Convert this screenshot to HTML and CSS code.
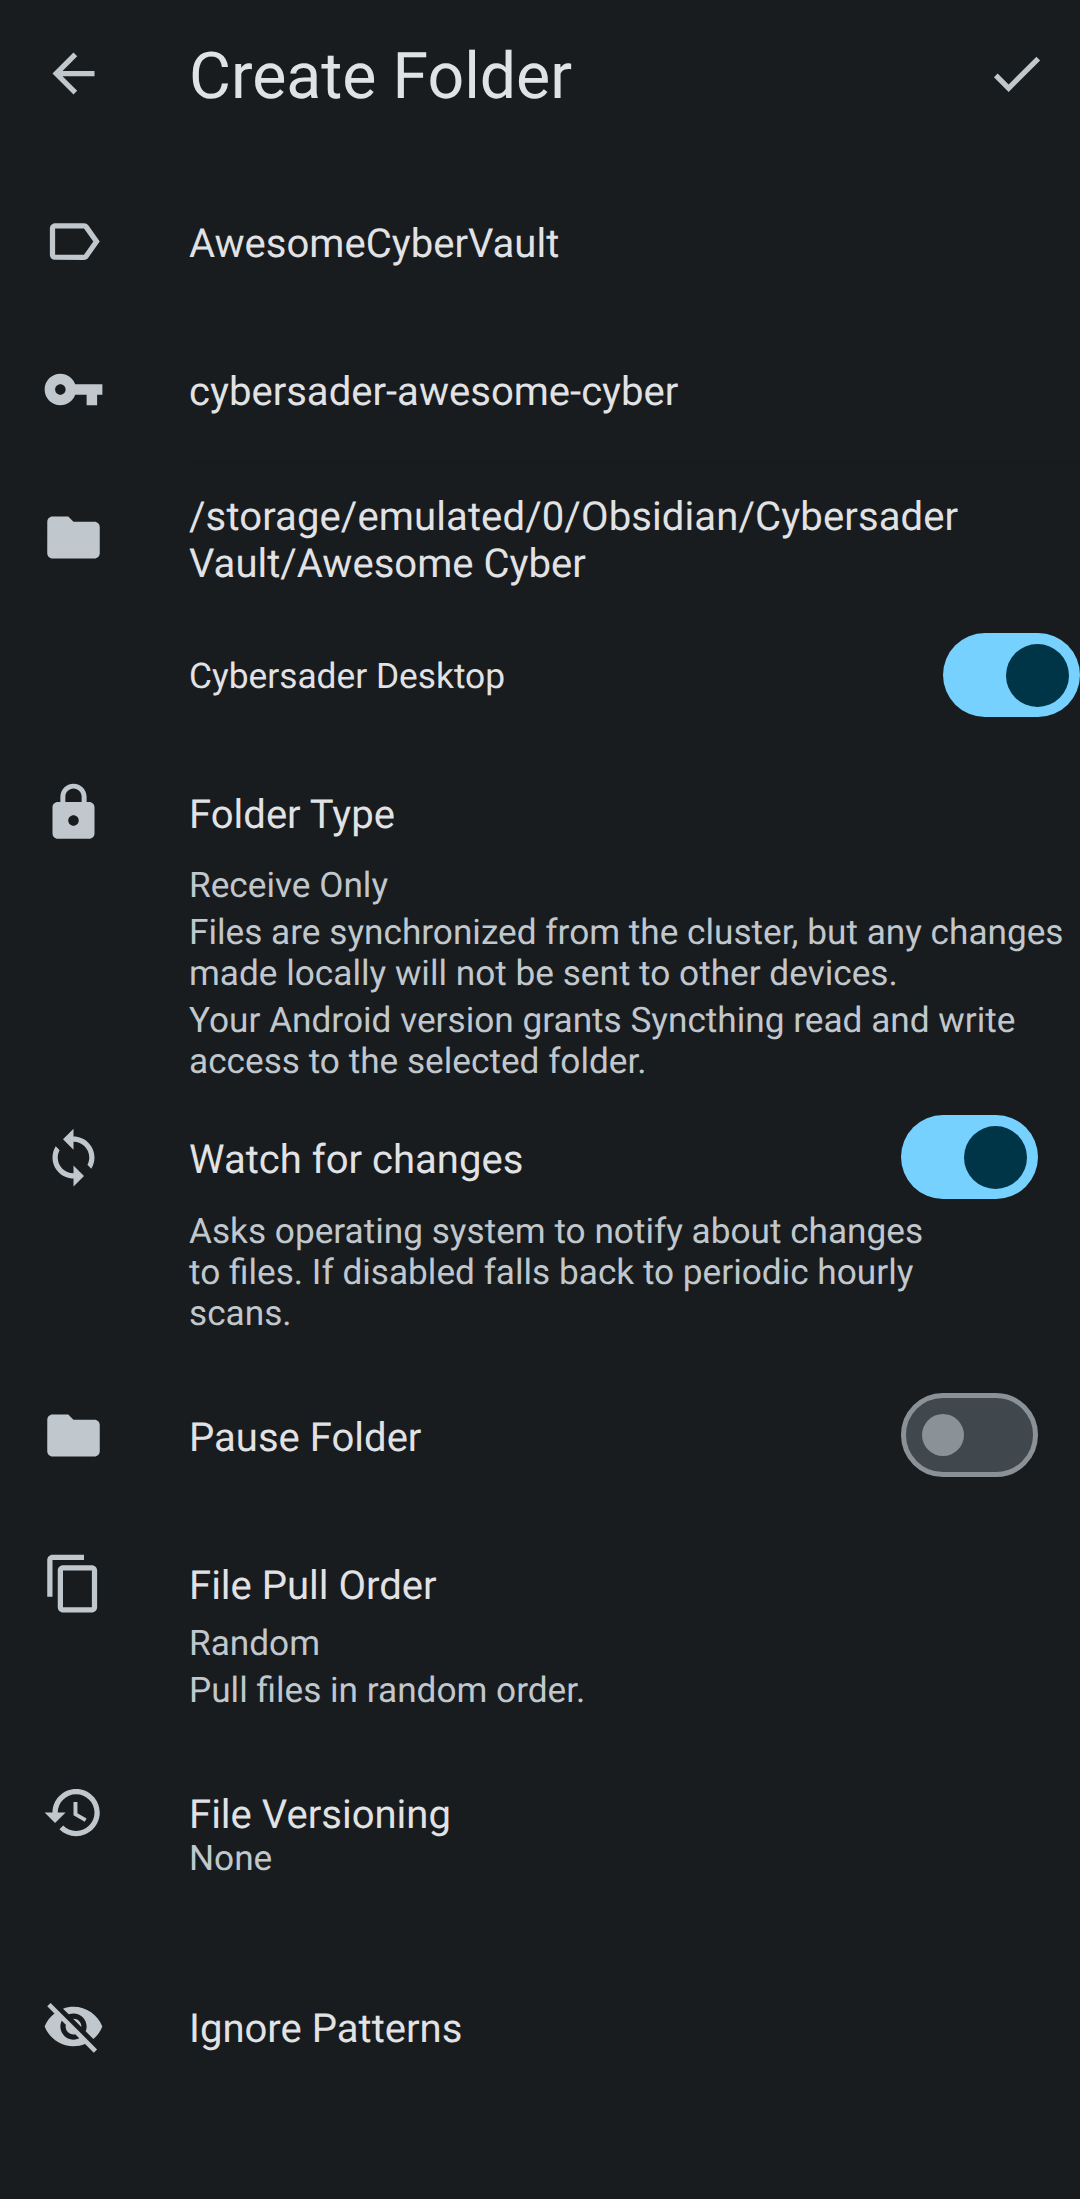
FILE: index.html
```
<!DOCTYPE html>
<html lang="en">
<head>
<meta charset="utf-8">
<title>Create Folder</title>
<link rel="stylesheet" href="styles.css">
</head>
<body>
<header class="bar">
  <svg class="icon" viewBox="0 0 24 24"><path d="M20 11H7.83l5.59-5.59L12 4l-8 8 8 8 1.41-1.41L7.83 13H20z"/></svg>
  <h1 class="bar-title">Create Folder</h1>
  <svg class="icon" viewBox="0 0 24 24"><path d="M9 16.17 4.83 12l-1.42 1.41L9 19 21 7l-1.41-1.41z"/></svg>
</header>
<main class="list">
  <section class="row">
    <svg class="icon" viewBox="0 0 24 24"><path d="M17.63 5.84C17.27 5.33 16.67 5 16 5L5 5.01C3.9 5.01 3 5.9 3 7v10c0 1.1.9 1.99 2 1.99L16 19c.67 0 1.27-.33 1.63-.84L22 12zM16 17H5V7h11l3.55 5z"/></svg>
    <div class="text"><div class="title">AwesomeCyberVault</div></div>
  </section>
  <section class="row">
    <svg class="icon" viewBox="0 0 24 24"><path d="M12.65 10C11.83 7.67 9.61 6 7 6c-3.31 0-6 2.69-6 6s2.69 6 6 6c2.61 0 4.83-1.67 5.65-4H17v4h4v-4h2v-4zM7 14c-1.1 0-2-.9-2-2s.9-2 2-2 2 .9 2 2-.9 2-2 2z"/></svg>
    <div class="text"><div class="title">cybersader-awesome-cyber</div></div>
  </section>
  <section class="row">
    <svg class="icon" viewBox="0 0 24 24"><path d="M10 4H4c-1.1 0-1.99.9-1.99 2L2 18c0 1.1.9 2 2 2h16c1.1 0 2-.9 2-2V8c0-1.1-.9-2-2-2h-8z"/></svg>
    <div class="text path"><div class="title"><span class="path-root">/storage/emulated/0/Obsidian/Cybersader</span><br>Vault/Awesome Cyber</div></div>
  </section>
  <section class="row device">
    <div class="text"><div class="name">Cybersader Desktop</div></div>
    <div class="switch on"><span class="thumb"></span></div>
  </section>
  <section class="row folder-type">
    <svg class="icon" viewBox="0 0 24 24"><path d="M18 8h-1V6c0-2.76-2.24-5-5-5S7 3.24 7 6v2H6c-1.1 0-2 .9-2 2v10c0 1.1.9 2 2 2h12c1.1 0 2-.9 2-2V10c0-1.1-.9-2-2-2zm-6 9c-1.1 0-2-.9-2-2s.9-2 2-2 2 .9 2 2-.9 2-2 2zm3.1-9H8.9V6c0-1.71 1.39-3.1 3.1-3.1s3.1 1.39 3.1 3.1z"/></svg>
    <div class="text">
      <div class="title">Folder Type</div>
      <div class="summary">
        <p>Receive Only</p>
        <p>Files are synchronized from the cluster, but any changes<br>made locally will not be sent to other devices.</p>
        <p>Your Android version grants Syncthing read and write<br>access to the selected folder.</p>
      </div>
    </div>
  </section>
  <section class="row watch">
    <svg class="icon" viewBox="0 0 24 24"><path d="M12 4V1L8 5l4 4V6c3.31 0 6 2.69 6 6 0 1.01-.25 1.97-.7 2.8l1.46 1.46C19.54 15.03 20 13.57 20 12c0-4.42-3.58-8-8-8zm0 14c-3.31 0-6-2.69-6-6 0-1.01.25-1.97.7-2.8L5.24 7.74C4.46 8.97 4 10.43 4 12c0 4.42 3.58 8 8 8v3l4-4-4-4z"/></svg>
    <div class="text">
      <div class="title">Watch for changes</div>
      <div class="summary"><p>Asks operating system to notify about changes<br>to files. If disabled falls back to periodic hourly<br>scans.</p></div>
    </div>
    <div class="switch on"><span class="thumb"></span></div>
  </section>
  <section class="row">
    <svg class="icon" viewBox="0 0 24 24"><path d="M10 4H4c-1.1 0-1.99.9-1.99 2L2 18c0 1.1.9 2 2 2h16c1.1 0 2-.9 2-2V8c0-1.1-.9-2-2-2h-8z"/></svg>
    <div class="text"><div class="title">Pause Folder</div></div>
    <div class="switch"><span class="thumb"></span></div>
  </section>
  <section class="row pull-order">
    <svg class="icon" viewBox="0 0 24 24"><path d="M16 1H4c-1.1 0-2 .9-2 2v14h2V3h12zm3 4H8c-1.1 0-2 .9-2 2v14c0 1.1.9 2 2 2h11c1.1 0 2-.9 2-2V7c0-1.1-.9-2-2-2zm0 16H8V7h11z"/></svg>
    <div class="text">
      <div class="title">File Pull Order</div>
      <div class="summary"><p>Random</p><p>Pull files in random order.</p></div>
    </div>
  </section>
  <section class="row versioning">
    <svg class="icon" viewBox="0 0 24 24"><path d="M13 3c-4.97 0-9 4.03-9 9H1l3.89 3.89.07.14L9 12H6c0-3.87 3.13-7 7-7s7 3.13 7 7-3.13 7-7 7c-1.93 0-3.68-.79-4.94-2.06l-1.42 1.42C8.27 19.99 10.51 21 13 21c4.97 0 9-4.03 9-9s-4.03-9-9-9zm-1 5v5l4.28 2.54.72-1.21-3.5-2.08V8z"/></svg>
    <div class="text">
      <div class="title">File Versioning</div>
      <div class="summary"><p>None</p></div>
    </div>
  </section>
  <section class="row last">
    <svg class="icon" viewBox="0 0 24 24"><path d="M12 7c2.76 0 5 2.24 5 5 0 .65-.13 1.26-.36 1.83l2.92 2.92c1.51-1.26 2.7-2.89 3.43-4.75-1.73-4.39-6-7.5-11-7.5-1.4 0-2.74.25-3.98.7l2.16 2.16C10.74 7.13 11.35 7 12 7zM2 4.27l2.28 2.28.46.46C3.08 8.3 1.78 10.02 1 12c1.73 4.39 6 7.5 11 7.5 1.55 0 3.03-.3 4.38-.84l.42.42L19.73 22 21 20.73 3.27 3zM7.53 9.8l1.55 1.55c-.05.21-.08.43-.08.65 0 1.66 1.34 3 3 3 .22 0 .44-.03.65-.08l1.55 1.55c-.67.33-1.41.53-2.2.53-2.76 0-5-2.24-5-5 0-.79.2-1.53.53-2.2zm4.31-.78 3.15 3.15.02-.16c0-1.66-1.34-3-3-3z"/></svg>
    <div class="text"><div class="title">Ignore Patterns</div></div>
  </section>
</main>
</body>
</html>
```
FILE: styles.css
```
* { box-sizing: border-box; margin: 0; padding: 0; }

body {
  min-height: 2199px;
  background: #191c1e;
  color: #e1e2e5;
  font-family: Roboto, sans-serif;
  text-rendering: geometricPrecision;
}

.icon {
  width: 63px;
  height: 63px;
  flex: none;
  fill: #c0c7cd;
}

.bar {
  display: flex;
  align-items: center;
  height: 147px;
  padding: 0 32px 0 42px;
  margin-bottom: 21px;
}

.bar-title {
  flex: 1;
  padding: 6px 0 0 84px;
  font-size: 64.4px;
  font-weight: 400;
  line-height: 75px;
}

.row {
  display: flex;
  align-items: flex-start;
  min-height: 148px;
  padding: 0 42px;
}

.row > .icon { margin-top: 42px; }

.text {
  flex: 1;
  align-self: stretch;
  margin-left: 84px;
  margin-right: -42px;
  padding-top: 52px;
  white-space: nowrap;
  border-bottom: 1px solid #171a1c;
}

.title { font-size: 40.05px; line-height: 47px; }

.path { padding-top: 29px; }
.path-root { letter-spacing: 0.1px; }

.device { min-height: 127px; padding: 0; }
.device .text { margin-left: 189px; margin-right: 0; padding-top: 44px; }
.name { font-size: 35.3px; line-height: 41px; }

.summary {
  display: flex;
  flex-direction: column;
  gap: 6px;
  margin-top: 27px;
  font-size: 35.2px;
  line-height: 41px;
  color: #c0c7cd;
}

.folder-type { height: 345px; }
.watch { height: 278px; }
.watch .summary { margin-top: 28px; }
.pull-order { height: 229px; }
.pull-order .summary { margin-top: 14px; }
.versioning { height: 214px; }
.versioning .summary { margin-top: 0; }
.versioning .text, .last .text { border-bottom: 0; }

.switch {
  display: flex;
  align-items: center;
  flex: none;
  width: 137px;
  height: 84px;
  margin-top: 31px;
  padding: 0 16px;
  border: 5px solid #8b9297;
  border-radius: 42px;
  background: #41484d;
}

.device .switch { margin-top: 21px; }

.switch .thumb {
  width: 42px;
  height: 42px;
  border-radius: 50%;
  background: #8b9297;
}

.switch.on {
  justify-content: flex-end;
  padding: 0 11px;
  border: 0;
  background: #76d1ff;
}

.switch.on .thumb {
  width: 63px;
  height: 63px;
  background: #003548;
}
```
